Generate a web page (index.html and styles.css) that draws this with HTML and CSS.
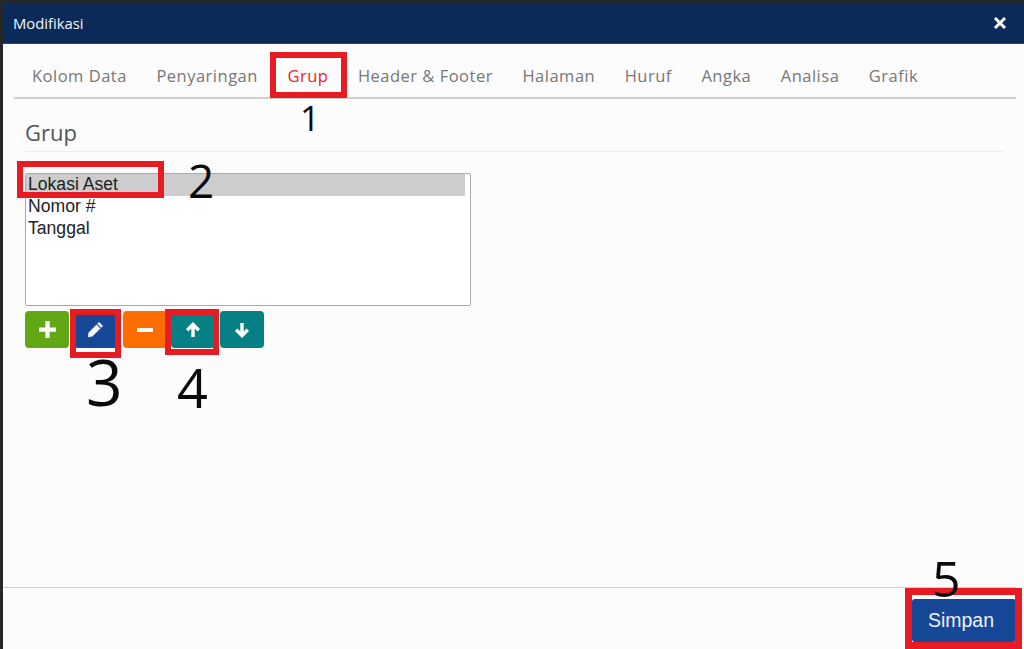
FILE: index.html
```html
<!DOCTYPE html>
<html lang="en">
<head>
    <meta charset="UTF-8">
    <meta name="viewport" content="width=device-width, initial-scale=1.0">
    <title>Modifikasi</title>
    <link rel="stylesheet" href="styles.css">
</head>
<body>
    <div class="dialog">
        <div class="dialog-header">
            <span class="dialog-title">Modifikasi</span>
            <svg class="close-icon" width="14" height="14" viewBox="0 0 14 14">
                <path d="M2 2 L12 12 M12 2 L2 12" stroke="#fff" stroke-width="3"/>
            </svg>
        </div>

        <!-- Tabs -->
        <div class="tabs">
            <a class="tab">Kolom Data</a>
            <a class="tab">Penyaringan</a>
            <a class="tab active">Grup</a>
            <a class="tab">Header &amp; Footer</a>
            <a class="tab">Halaman</a>
            <a class="tab">Huruf</a>
            <a class="tab">Angka</a>
            <a class="tab">Analisa</a>
            <a class="tab">Grafik</a>
        </div>

        <div class="dialog-body">
            <h2 class="section-title">Grup</h2>
            <div class="list-box">
                <div class="list-item selected">Lokasi Aset</div>
                <div class="list-item">Nomor #</div>
                <div class="list-item">Tanggal</div>
            </div>
            <div class="actions">
                <button class="icon-btn green">
                    <svg width="17" height="17" viewBox="0 0 16 16"><path d="M8 0 V16 M0 8 H16" stroke="#fff" stroke-width="4"/></svg>
                </button>
                <button class="icon-btn blue">
                    <svg width="17" height="17" viewBox="0 0 16 16"><path d="M11.4 1.2 L14.8 4.6 L13.3 6.1 L9.9 2.7 Z M9 3.6 L12.4 7 L5 14.4 L1 15 L1.6 11 Z" fill="#fff" stroke="#fff" stroke-width="0.4"/></svg>
                </button>
                <button class="icon-btn orange">
                    <svg width="16" height="16" viewBox="0 0 16 16"><path d="M0 8 H16" stroke="#fff" stroke-width="4"/></svg>
                </button>
                <button class="icon-btn teal">
                    <svg width="16" height="16" viewBox="0 0 16 16"><path d="M8 15 V3 M2.2 8.2 L8 2.4 L13.8 8.2" fill="none" stroke="#fff" stroke-width="3.4"/></svg>
                </button>
                <button class="icon-btn teal">
                    <svg width="16" height="16" viewBox="0 0 16 16"><path d="M8 1 V13 M2.2 7.8 L8 13.6 L13.8 7.8" fill="none" stroke="#fff" stroke-width="3.4"/></svg>
                </button>
            </div>
        </div>

        <div class="dialog-footer">
            <button class="save-btn">Simpan</button>
        </div>
    </div>

    <!-- Red marks and numbers drawn over the screenshot -->
    <div class="mark mark-tab"></div>
    <div class="mark mark-item"></div>
    <div class="mark mark-edit"></div>
    <div class="mark mark-up"></div>
    <div class="mark mark-save"></div>
    <span class="note note-1">1</span>
    <span class="note note-2">2</span>
    <span class="note note-3">3</span>
    <span class="note note-4">4</span>
    <span class="note note-5">5</span>
</body>
</html>
```

FILE: styles.css
```css
html, body {
    height: 100%;
}
body {
    margin: 0;
    padding: 3px 0 0 3px;
    box-sizing: border-box;
    background-color: #26282b;
    overflow: hidden;
    font-family: "Open Sans", "Noto Sans", sans-serif;
}
.dialog {
    height: 100%;
    display: flex;
    flex-direction: column;
    background-color: #fcfcfc;
}
.dialog-header {
    height: 41px;
    flex: none;
    display: flex;
    align-items: center;
    justify-content: space-between;
    padding: 0 17px 1px 10px;
    background-color: #0b2a57;
    border-bottom: 1px solid #1d4a80;
    box-sizing: border-box;
}
.dialog-title {
    color: #f4f6f9;
    font-size: 14.8px;
}
.close-icon {
    display: block;
}
.tabs {
    display: flex;
    gap: 29.5px;
    height: 55px;
    margin: 0 8px 0 11px;
    padding: 20px 0 0 18px;
    box-sizing: border-box;
    border-bottom: 2px solid #cfcfcf;
}
.tab {
    font-size: 16.5px;
    line-height: 24px;
    letter-spacing: 0.5px;
    color: #777;
    white-space: nowrap;
}
.tab.active {
    color: #e8262a;
}
.dialog-body {
    flex: 1;
    padding: 0 20px 0 22px;
}
.section-title {
    margin: 0;
    padding: 16px 0 2px;
    height: 34px;
    font-size: 22px;
    line-height: 34px;
    font-weight: normal;
    color: #555;
    border-bottom: 1px solid #eee;
}
.list-box {
    width: 446px;
    height: 133px;
    margin-top: 21px;
    padding: 0 5px 0 0;
    box-sizing: border-box;
    background-color: white;
    border: 1px solid #aaa;
    border-radius: 2px;
    font-family: "Liberation Sans", Arial, sans-serif;
    font-size: 17.6px;
    color: #222;
}
.list-item {
    height: 22px;
    line-height: 21px;
    padding-left: 2px;
}
.list-item.selected {
    background-color: #cdcdcd;
}
.actions {
    display: flex;
    gap: 4.75px;
    margin-top: 5px;
}
.icon-btn {
    width: 44px;
    height: 37px;
    padding: 0;
    border: none;
    border-radius: 4px;
    display: flex;
    align-items: center;
    justify-content: center;
}
.green {
    background-color: #62a814;
}
.blue {
    background-color: #174797;
}
.orange {
    background-color: #ff6c00;
}
.teal {
    background-color: #058084;
}
.dialog-footer {
    flex: none;
    height: 62px;
    margin-right: 8px;
    padding-top: 11px;
    box-sizing: border-box;
    border-top: 1px solid #ccc;
    display: flex;
    justify-content: flex-end;
    align-items: flex-start;
}
.save-btn {
    width: 104px;
    height: 43px;
    padding: 0 6px 0 0;
    border: none;
    border-radius: 3px;
    background-color: #174797;
    color: #eef2f8;
    font-family: "Liberation Sans", Arial, sans-serif;
    font-size: 19.5px;
}
.mark {
    position: absolute;
    box-sizing: border-box;
    border: 6px solid #e71c23;
}
.mark-tab {
    left: 270px;
    top: 52px;
    width: 77px;
    height: 46px;
}
.mark-item {
    left: 17px;
    top: 161px;
    width: 147px;
    height: 37px;
}
.mark-edit {
    left: 70px;
    top: 309px;
    width: 51px;
    height: 49px;
}
.mark-up {
    left: 165px;
    top: 309px;
    width: 54px;
    height: 46px;
}
.mark-save {
    left: 905px;
    top: 588px;
    width: 117px;
    height: 61px;
    border-width: 7px;
}
.note {
    position: absolute;
    color: #0a0a0a;
    font-family: "Open Sans", sans-serif;
    line-height: 1;
}
.note-1 {
    left: 300px;
    top: 100px;
    font-size: 35px;
}
.note-2 {
    left: 188px;
    top: 157px;
    font-size: 46px;
}
.note-3 {
    left: 86px;
    top: 350px;
    font-size: 64px;
}
.note-4 {
    left: 177px;
    top: 360px;
    font-size: 54px;
}
.note-5 {
    left: 932px;
    top: 553px;
    font-size: 50px;
}
```
